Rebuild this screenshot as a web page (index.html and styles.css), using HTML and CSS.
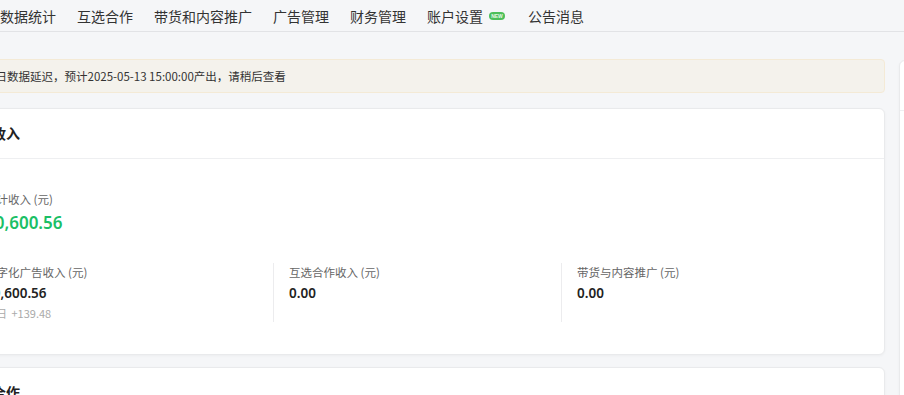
FILE: index.html
```html
<!DOCTYPE html>
<html lang="zh-CN">
<head>
    <meta charset="UTF-8">
    <title>数据统计</title>
    <link rel="stylesheet" href="styles.css">
</head>
<body>
    <nav class="topnav">
        <a class="nav-item">数据统计</a>
        <a class="nav-item">互选合作</a>
        <a class="nav-item">带货和内容推广</a>
        <a class="nav-item">广告管理</a>
        <a class="nav-item">财务管理</a>
        <a class="nav-item">账户设置<span class="badge-new">NEW</span></a>
        <a class="nav-item">公告消息</a>
    </nav>

    <div class="layout">
        <main class="main-col">
            <div class="notice">昨日数据延迟，预计2025-05-13 15:00:00产出，请稍后查看</div>

            <section class="card">
                <div class="card-header">收入</div>
                <div class="card-body">
                    <div class="total-label">累计收入 (元)</div>
                    <div class="total-value">30,600.56</div>

                    <div class="stat-row">
                        <div class="stat">
                            <div class="stat-label">数字化广告收入 (元)</div>
                            <div class="stat-value">30,600.56</div>
                            <div class="stat-sub">昨日 <span>+139.48</span></div>
                        </div>
                        <div class="stat">
                            <div class="stat-label">互选合作收入 (元)</div>
                            <div class="stat-value">0.00</div>
                        </div>
                        <div class="stat">
                            <div class="stat-label">带货与内容推广 (元)</div>
                            <div class="stat-value">0.00</div>
                        </div>
                    </div>
                </div>
            </section>

            <section class="card">
                <div class="card-header">合作</div>
                <div class="card-body"></div>
            </section>
        </main>

        <aside class="side-col">
            <section class="card side-card">
                <div class="card-header">公告</div>
                <div class="card-body"></div>
            </section>
        </aside>
    </div>
</body>
</html>
```

FILE: styles.css
```css
body {
    margin: 0;
    background-color: #f5f6f8;
    font-family: "Noto Sans CJK SC", "Noto Sans", sans-serif;
    color: #333;
    overflow: hidden;
}
.topnav {
    display: flex;
    align-items: center;
    gap: 21px;
    height: 31px;
    padding-left: 0;
    border-bottom: 1px solid #e2e3e6;
    background-color: #f5f6f8;
}
.nav-item {
    display: flex;
    align-items: center;
    font-size: 14px;
    color: #333;
    white-space: nowrap;
    cursor: pointer;
}
.badge-new {
    display: inline-block;
    width: 16px;
    height: 8px;
    margin-left: 6px;
    margin-right: 2px;
    line-height: 8px;
    text-align: center;
    border-radius: 4px;
    background-color: #4cbf5a;
    color: #e8f8ea;
    font-family: "Liberation Sans", sans-serif;
    font-size: 5px;
    font-weight: bold;
}
.layout {
    display: flex;
    gap: 14px;
    margin-left: -36px;
    padding-top: 27px;
}
.main-col {
    flex: 0 0 921px;
    display: flex;
    flex-direction: column;
}
.side-col {
    flex: 0 0 300px;
    padding-top: 1px;
}
.notice {
    height: 32px;
    line-height: 32px;
    padding-left: 19px;
    margin-bottom: 15px;
    border: 1px solid #f4ead6;
    border-radius: 4px;
    background-color: #f4f2ec;
    font-size: 11.5px;
    color: #333;
}
.card {
    background-color: #fff;
    border: 1px solid #e9eaec;
    border-radius: 6px;
    box-shadow: 0 1px 3px rgba(0, 0, 0, 0.04);
    margin-bottom: 12px;
}
.card-header {
    height: 49px;
    line-height: 49px;
    padding-left: 27px;
    border-bottom: 1px solid #eeeff1;
    font-size: 14px;
    font-weight: bold;
    color: #222;
}
.card-body {
    padding: 30px 20px 32px;
    min-height: 40px;
}
.total-label {
    font-size: 11.5px;
    color: #666;
    line-height: 20px;
}
.total-value {
    margin-top: 1px;
    font-family: "Noto Sans", "Noto Sans CJK SC", sans-serif;
    font-size: 17px;
    font-weight: 600;
    color: #1bbf66;
    line-height: 26px;
}
.stat-row {
    display: grid;
    grid-template-columns: repeat(3, 288px);
    margin-top: 27px;
}
.stat {
    padding-left: 15px;
    border-left: 1px solid #ececee;
}
.stat:first-child {
    padding-left: 0;
    border-left: none;
}
.stat-label {
    font-size: 11.5px;
    color: #666;
    line-height: 18px;
}
.stat-value {
    margin-top: 1px;
    font-family: "Noto Sans", "Noto Sans CJK SC", sans-serif;
    font-size: 13.5px;
    font-weight: 600;
    color: #222;
    line-height: 22px;
}
.stat-sub {
    font-size: 11px;
    color: #aaa;
    line-height: 18px;
}
.stat-sub span {
    margin-left: 2px;
}
.side-card {
    min-height: 400px;
}
```
